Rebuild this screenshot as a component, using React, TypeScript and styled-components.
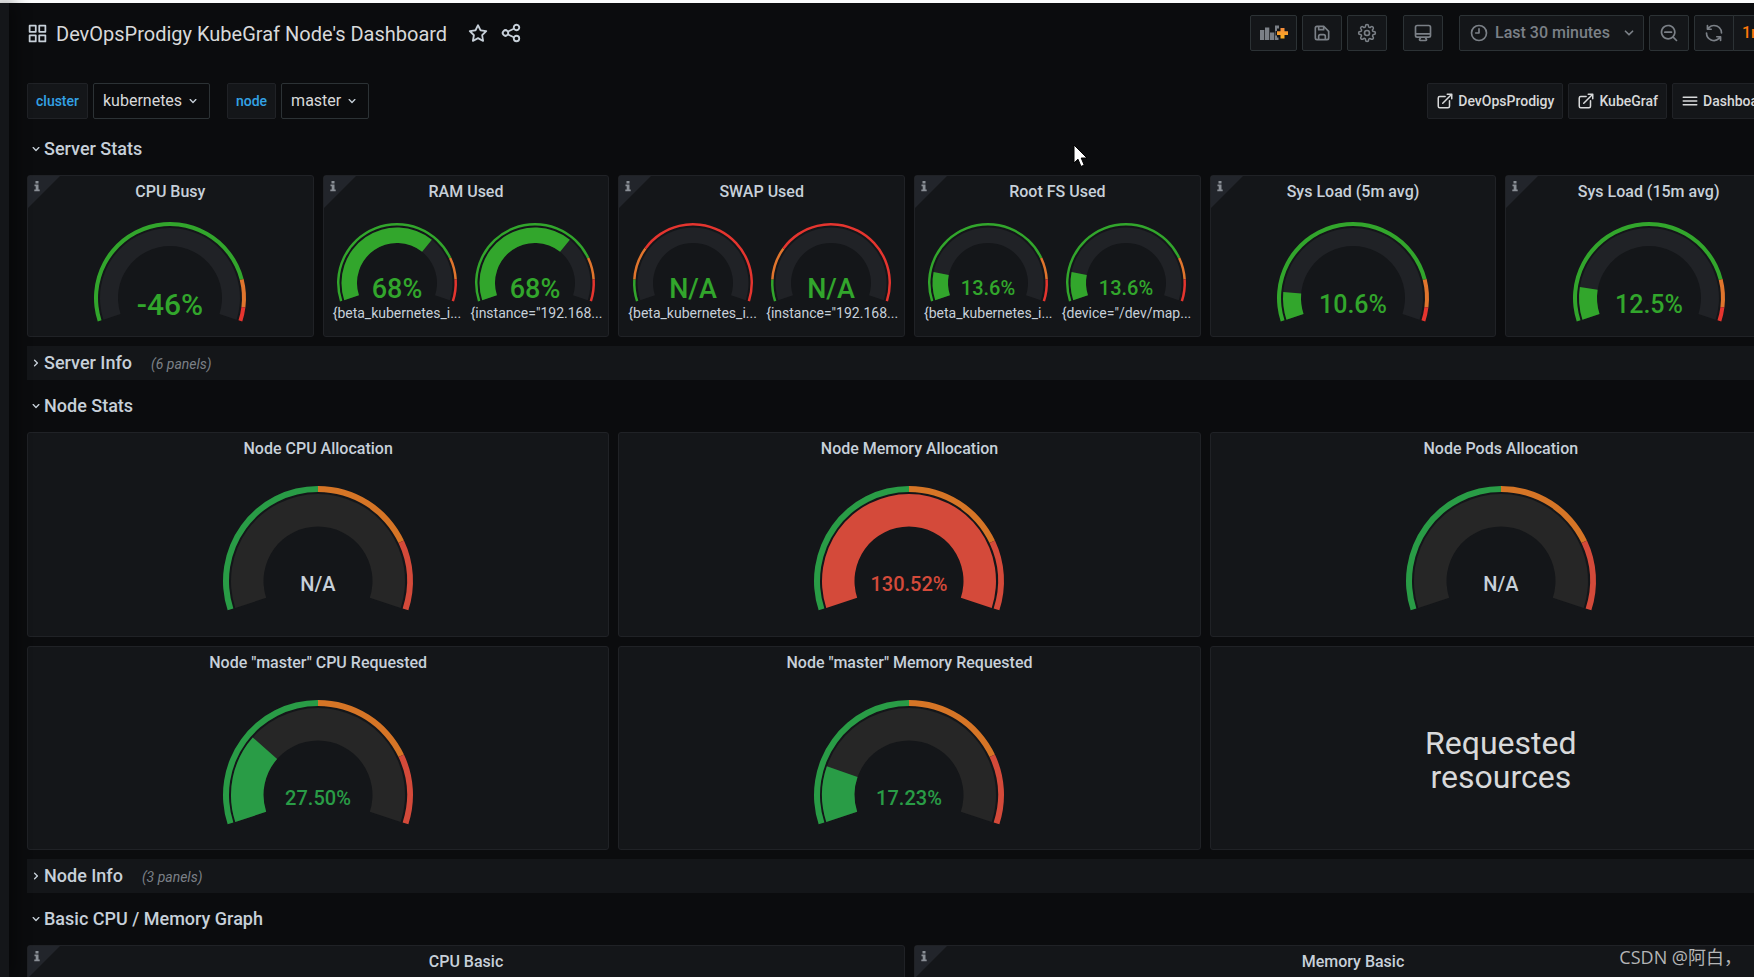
import React from 'react';
import styled, { createGlobalStyle, css } from 'styled-components';

const color = {
  page: '#0b0c0e',
  panel: '#141619',
  border: '#202226',
  inputBorder: '#2c3235',
  text: '#c7d0d9',
  strong: '#d8d9da',
  weak: '#7b8087',
  blue: '#33a2e5',
  orange: '#ff780a',
  corner: '#22252b',
};

const GlobalStyle = createGlobalStyle`
  *, *::before, *::after { box-sizing: border-box; }
  body {
    margin: 0;
    background: ${color.page};
    color: ${color.text};
    font-family: Roboto, "Noto Sans CJK SC", sans-serif;
    font-size: 16px;
    line-height: 24px;
  }
  button, select { font: inherit; color: inherit; margin: 0; cursor: pointer; }
  a { color: inherit; text-decoration: none; }
  h1, h2, h3, p { margin: 0; }
`;

/* ---------- page frame ---------- */

const Page = styled.div`
  display: flex;
  flex-direction: column;
  height: 100vh;
  overflow: hidden;
  position: relative;
`;

const TopStrip = styled.div`
  flex: none;
  height: 3px;
  background: #fafbfb;
`;

const Shell = styled.div`
  display: flex;
  flex: 1;
  min-height: 0;
`;

const Sidebar = styled.aside`
  flex: none;
  width: 9px;
  background: ${color.panel};
  box-shadow: 0 0 20px #000;
  z-index: 1;
`;

const Main = styled.main`
  flex: 1;
  min-width: 0;
  overflow: hidden;
  padding: 12px 0 0 18px;
`;

/* The dashboard is wider than the viewport and runs past its right edge. */
const Dashboard = styled.div`
  margin-right: -38px;
`;

const Bar = styled.header`
  display: flex;
  align-items: center;
  height: 36px;
`;

const SubMenu = styled.div`
  display: flex;
  align-items: center;
  height: 36px;
  margin: 32px 0 13px;
`;

const Spacer = styled.div`
  flex: 1;
`;

const Title = styled.h1`
  font-size: 20px;
  line-height: 24px;
  font-weight: 400;
  color: ${color.strong};
  padding-top: 2px;
  margin: 0 20px 0 8px;
  white-space: nowrap;
`;

const IconButton = styled.button`
  display: flex;
  padding: 0;
  margin-right: 11px;
  border: 0;
  background: none;
`;

const controlBox = css`
  display: flex;
  align-items: center;
  height: 36px;
  border: 1px solid ${color.inputBorder};
  border-radius: 2px;
  background: ${color.panel};
  white-space: nowrap;
`;

const ToolButton = styled.button<{ $wide?: boolean; $joined?: boolean; $gap?: number }>`
  ${controlBox}
  && { margin-left: ${(p) => p.$gap ?? 5}px; }
  justify-content: center;
  width: ${(p) => (p.$wide ? 47 : 40)}px;
  padding: 0;
  && { color: ${color.weak}; }
  ${(p) => p.$joined && 'border-radius: 2px 0 0 2px;'}
`;

const TimeButton = styled.button`
  ${controlBox}
  width: 185px;
  padding: 0 4px 0 9px;
  gap: 6px;
  && { margin-left: 16px; color: ${color.weak}; }
  font-weight: 500;
  svg:last-child { margin-left: auto; }
`;

const SelectWrap = styled.div`
  position: relative;
  display: flex;
  svg {
    position: absolute;
    right: 9px;
    top: 10px;
    pointer-events: none;
  }
`;

const Select = styled.select`
  ${controlBox}
  appearance: none;
  background: ${color.page};
  padding: 0 26px 0 9px;
  outline: none;
  && { color: ${color.strong}; }
`;

const IntervalSelect = styled(Select)`
  width: 59px;
  padding: 0 24px 0 8px;
  border-radius: 0 2px 2px 0;
  background: ${color.panel};
  font-weight: 500;
  && { color: ${color.orange}; margin-left: -1px; }
`;

const Variable = styled.div`
  display: flex;
  gap: 5px;
  margin-right: 17px;
`;

const VariableLabel = styled.label`
  ${controlBox}
  border-color: ${color.border};
  padding: 0 8px;
  font-size: 14px;
  font-weight: 500;
  color: ${color.blue};
`;

const DashLink = styled.a`
  ${controlBox}
  border-color: ${color.border};
  padding: 0 8px;
  gap: 4px;
  margin-left: 5px;
  font-size: 14px;
  font-weight: 500;
  color: ${color.strong};
`;

const DashMenu = styled(DashLink).attrs({ as: 'button' })`
  width: 120px;
  && { margin-left: 5px; color: ${color.strong}; font-size: 14px; font-weight: 500; }
`;

/* ---------- rows and panels ---------- */

const Stack = styled.div`
  display: flex;
  flex-direction: column;
  gap: 9px;
`;

const RowHead = styled.h2<{ $collapsed?: boolean }>`
  display: flex;
  align-items: center;
  height: 34px;
  font-size: 18px;
  font-weight: 500;
  background: ${(p) => (p.$collapsed ? color.panel : 'transparent')};
`;

const RowToggle = styled.button`
  display: flex;
  align-items: center;
  padding: 0 0 0 1px;
  border: 0;
  background: none;
`;

const RowCount = styled.span`
  margin-left: 19px;
  padding-top: 2px;
  font-size: 14px;
  font-style: italic;
  font-weight: 400;
  color: ${color.weak};
`;

const Grid = styled.div<{ $cols: number; $height: number }>`
  display: grid;
  grid-template-columns: repeat(${(p) => p.$cols}, minmax(0, 1fr));
  grid-auto-rows: 1fr;
  gap: 9px;
  height: ${(p) => p.$height}px;
`;

const PanelBox = styled.section`
  position: relative;
  display: flex;
  flex-direction: column;
  border: 1px solid ${color.border};
  border-radius: 3px;
  background: ${color.panel};
`;

const PanelTitle = styled.h3`
  flex: none;
  height: 34px;
  line-height: 32px;
  font-size: 16px;
  font-weight: 500;
  text-align: center;
`;

const CornerIcon = styled.svg`
  position: absolute;
  top: 0;
  left: 0;
`;

const SingleBody = styled.div<{ $top: number }>`
  display: flex;
  justify-content: center;
  padding-top: ${(p) => p.$top}px;
`;

const PairBody = styled.div`
  display: grid;
  grid-template-columns: 1fr 1fr;
  gap: 9px;
  padding: 13px 9px 0;
`;

const PairCell = styled.div`
  display: flex;
  flex-direction: column;
  align-items: center;
  min-width: 0;
`;

const Series = styled.p`
  align-self: stretch;
  font-size: 14px;
  line-height: 20px;
  white-space: nowrap;
`;

const TextBody = styled.div`
  flex: 1;
  display: flex;
  align-items: center;
  justify-content: center;
  padding-top: 24px;
`;

const BigText = styled.p`
  width: 180px;
  font-size: 32px;
  line-height: 34px;
  text-align: center;
  color: ${color.strong};
`;

const GaugeSvg = styled.svg`
  display: block;
  overflow: visible;
`;

const GaugeText = styled.text`
  font-family: Roboto, sans-serif;
  font-weight: 500;
  text-anchor: middle;
`;

const Pointer = styled.svg`
  position: absolute;
  left: 1073px;
  top: 144px;
  z-index: 2;
`;

const Watermark = styled.div`
  position: absolute;
  right: 12px;
  bottom: 8px;
  z-index: 2;
  font-family: "Open Sans", "Noto Sans CJK SC", sans-serif;
  font-size: 18px;
  line-height: 24px;
  color: #b4b5b6;
`;

/* ---------- icons ---------- */

const paths = {
  apps: 'M10,13H3a1,1,0,0,0-1,1v7a1,1,0,0,0,1,1h7a1,1,0,0,0,1-1V14A1,1,0,0,0,10,13ZM9,20H4V15H9ZM21,2H14a1,1,0,0,0-1,1v7a1,1,0,0,0,1,1h7a1,1,0,0,0,1-1V3A1,1,0,0,0,21,2ZM20,9H15V4h5Zm1,4H14a1,1,0,0,0-1,1v7a1,1,0,0,0,1,1h7a1,1,0,0,0,1-1V14A1,1,0,0,0,21,13Zm-1,7H15V15h5ZM10,2H3A1,1,0,0,0,2,3v7a1,1,0,0,0,1,1h7a1,1,0,0,0,1-1V3A1,1,0,0,0,10,2ZM9,9H4V4H9Z',
  star: 'M22,9.67A1,1,0,0,0,21.14,9l-5.69-.83L12.9,3a1,1,0,0,0-1.8,0L8.55,8.16,2.86,9a1,1,0,0,0-.81.68,1,1,0,0,0,.25,1l4.13,4-1,5.68A1,1,0,0,0,6.9,21.44L12,18.77l5.1,2.67a.93.93,0,0,0,.46.12,1,1,0,0,0,.59-.19,1,1,0,0,0,.4-1l-1-5.68,4.13-4A1,1,0,0,0,22,9.67Zm-6.15,4a1,1,0,0,0-.29.88l.72,4.2-3.76-2a1.06,1.06,0,0,0-.94,0l-3.76,2,.72-4.2a1,1,0,0,0-.29-.88l-3-3,4.21-.61a1,1,0,0,0,.76-.55L12,5.7l1.88,3.82a1,1,0,0,0,.76.55l4.21.61Z',
  share: 'M18,14a4,4,0,0,0-3.08,1.48l-5.1-2.35a3.64,3.64,0,0,0,0-2.26l5.1-2.35A4,4,0,1,0,14,6a4.17,4.17,0,0,0,.07.71L8.79,9.14a4,4,0,1,0,0,5.72l5.28,2.43A4.17,4.17,0,0,0,14,18a4,4,0,1,0,4-4ZM18,4a2,2,0,1,1-2,2A2,2,0,0,1,18,4ZM6,14a2,2,0,1,1,2-2A2,2,0,0,1,6,14Zm12,6a2,2,0,1,1,2-2A2,2,0,0,1,18,20Z',
  save: 'M20.71,9.29l-6-6a1,1,0,0,0-.32-.21A1.09,1.09,0,0,0,14,3H6A3,3,0,0,0,3,6V18a3,3,0,0,0,3,3H18a3,3,0,0,0,3-3V10A1,1,0,0,0,20.71,9.29ZM9,5h4V7H9Zm6,14H9V16a1,1,0,0,1,1-1h4a1,1,0,0,1,1,1Zm4-1a1,1,0,0,1-1,1H17V16a3,3,0,0,0-3-3H10a3,3,0,0,0-3,3v3H6a1,1,0,0,1-1-1V6A1,1,0,0,1,6,5H7V8A1,1,0,0,0,8,9h6a1,1,0,0,0,1-1V6.41l4,4Z',
  desktop: 'M19,2H5A3,3,0,0,0,2,5V15a3,3,0,0,0,3,3H7.64l-.58,1a2,2,0,0,0,0,2,2,2,0,0,0,1.75,1h6.46A2,2,0,0,0,17,21a2,2,0,0,0,0-2l-.59-1H19a3,3,0,0,0,3-3V5A3,3,0,0,0,19,2ZM8.77,20,10,18H14l1.2,2ZM20,15a1,1,0,0,1-1,1H5a1,1,0,0,1-1-1V14H20Zm0-3H4V5A1,1,0,0,1,5,4H19a1,1,0,0,1,1,1Z',
  clock: 'M12,2A10,10,0,1,0,22,12,10,10,0,0,0,12,2Zm0,18a8,8,0,1,1,8-8A8,8,0,0,1,12,20ZM12,6a1,1,0,0,0-1,1v4H8a1,1,0,0,0,0,2h4a1,1,0,0,0,1-1V7A1,1,0,0,0,12,6Z',
  zoomOut: 'M21.71,20.29,18,16.61A9,9,0,1,0,16.61,18l3.68,3.68a1,1,0,0,0,1.42,0A1,1,0,0,0,21.71,20.29ZM11,18a7,7,0,1,1,7-7A7,7,0,0,1,11,18Zm4-8H7a1,1,0,0,0,0,2h8a1,1,0,0,0,0-2Z',
  sync: 'M19.91,15.51H15.38a1,1,0,0,0,0,2h2.4A8,8,0,0,1,4,12a1,1,0,0,0-2,0,10,10,0,0,0,16.88,7.23V21a1,1,0,0,0,2,0V16.5A1,1,0,0,0,19.91,15.51ZM12,2A10,10,0,0,0,5.12,4.77V3a1,1,0,0,0-2,0V7.5a1,1,0,0,0,1,1h4.5a1,1,0,0,0,0-2H6.22A8,8,0,0,1,20,12a1,1,0,0,0,2,0A10,10,0,0,0,12,2Z',
  external: 'M18,10.82a1,1,0,0,0-1,1V19a1,1,0,0,1-1,1H5a1,1,0,0,1-1-1V8A1,1,0,0,1,5,7h7.18a1,1,0,0,0,0-2H5A3,3,0,0,0,2,8V19a3,3,0,0,0,3,3H16a3,3,0,0,0,3-3V11.82A1,1,0,0,0,18,10.82Zm3.92-8.2a1,1,0,0,0-.54-.54A1,1,0,0,0,21,2H15a1,1,0,0,0,0,2h3.59L8.29,14.29a1,1,0,0,0,0,1.42,1,1,0,0,0,1.42,0L20,5.41V9a1,1,0,0,0,2,0V3A1,1,0,0,0,21.92,2.62Z',
  bars: 'M3,8H21a1,1,0,0,0,0-2H3A1,1,0,0,0,3,8Zm18,8H3a1,1,0,0,0,0,2H21a1,1,0,0,0,0-2Zm0-5H3a1,1,0,0,0,0,2H21a1,1,0,0,0,0-2Z',
  down: 'M17,9.17a1,1,0,0,0-1.41,0L12,12.71,8.46,9.17a1,1,0,0,0-1.41,0,1,1,0,0,0,0,1.42l4.24,4.24a1,1,0,0,0,1.42,0L17,10.59A1,1,0,0,0,17,9.17Z',
  right: 'M14.83,11.29,10.59,7.05a1,1,0,0,0-1.42,0,1,1,0,0,0,0,1.41L12.71,12,9.17,15.54a1,1,0,0,0,0,1.41,1,1,0,0,0,.71.29,1,1,0,0,0,.71-.29l4.24-4.24A1,1,0,0,0,14.83,11.29Z',
};

const Icon = ({ name, size = 20 }: { name: keyof typeof paths; size?: number }) => (
  <svg width={size} height={size} viewBox="0 0 24 24" fill="currentColor" aria-hidden="true">
    <path d={paths[name]} />
  </svg>
);

const CogIcon = () => (
  <svg width="20" height="20" viewBox="0 0 24 24" fill="none" stroke="currentColor" strokeWidth="2" aria-hidden="true">
    <circle cx="12" cy="12" r="3" />
    <path
      transform="translate(1 1) scale(0.917)"
      d="M19.4 15a1.65 1.65 0 0 0 .33 1.82l.06.06a2 2 0 1 1-2.83 2.83l-.06-.06a1.65 1.65 0 0 0-2.8 1.17V21a2 2 0 0 1-4 0v-.09a1.65 1.65 0 0 0-2.9-1.26l-.06.06a2 2 0 1 1-2.83-2.83l.06-.06A1.65 1.65 0 0 0 3.1 14H3a2 2 0 0 1 0-4h.09A1.65 1.65 0 0 0 4.35 7.1l-.06-.06a2 2 0 1 1 2.83-2.83l.06.06A1.65 1.65 0 0 0 10 3.1V3a2 2 0 0 1 4 0v.09a1.65 1.65 0 0 0 2.82 1.18l.06-.06a2 2 0 1 1 2.83 2.83l-.06.06A1.65 1.65 0 0 0 20.9 10H21a2 2 0 0 1 0 4h-.09a1.65 1.65 0 0 0-1.51 1z"
    />
  </svg>
);

const AddPanelIcon = () => (
  <svg width="28" height="18" viewBox="0 0 28 18" aria-hidden="true">
    <defs>
      <linearGradient id="plus" x1="0" y1="0" x2="0" y2="1">
        <stop offset="0" stopColor="#f58b3c" />
        <stop offset="1" stopColor="#fbb01e" />
      </linearGradient>
    </defs>
    <g fill={color.weak}>
      <path d="M0 6h4.300v10h-4.300zM5 3.500h4.300v12.500h-4.300zM10 8.500h4.300v7.500h-4.300z" />
      <path d="M15 1.500h4v3h-2v2.500h-1.500v4.500h1.500v2h1.500v2.500h-3.500z" />
    </g>
    <path fill="url(#plus)" d="M20.500 4h4v3.300h3.500v3.700h-3.500v3.500h-4v-3.500h-3.500v-3.700h3.500z" />
  </svg>
);

/* ---------- gauge ---------- */

type Step = [to: number, color: string];

const shapes = {
  single: { r: 76, ring: 4, outer: 70, inner: 52, shift: 6, track: '#202226' },
  pair: { r: 60, ring: 2.5, outer: 55.5, inner: 40, shift: 5, track: '#202226' },
  legacy: { r: 95, ring: 6, outer: 87, inner: 54.5, shift: 3, track: '#262626' },
};

const SWEEP = 216;
const START = 162;

const point = (r: number, share: number, c: number) => {
  const a = ((START + SWEEP * share) * Math.PI) / 180;
  return `${(c + r * Math.cos(a)).toFixed(2)} ${(c + r * Math.sin(a)).toFixed(2)}`;
};

const band = (c: number, outer: number, inner: number, from: number, to: number) => {
  const large = (to - from) * SWEEP > 180 ? 1 : 0;
  return `M${point(outer, from, c)}A${outer} ${outer} 0 ${large} 1 ${point(outer, to, c)}L${point(inner, to, c)}A${inner} ${inner} 0 ${large} 0 ${point(inner, from, c)}Z`;
};

type GaugeProps = {
  shape: keyof typeof shapes;
  steps: Step[];
  fill?: number;
  value: string;
  size: number;
  tone: string;
};

const Gauge = ({ shape, steps, fill = 0, value, size, tone }: GaugeProps) => {
  const s = shapes[shape];
  const height = Math.ceil(s.r * 1.32);
  return (
    <GaugeSvg width={s.r * 2} height={height} viewBox={`0 0 ${s.r * 2} ${height}`} role="img" aria-label={value}>
      {fill < 1 && <path d={band(s.r, s.outer, s.inner, 0, 1)} fill={s.track} />}
      {fill > 0 && <path d={band(s.r, s.outer, s.inner, 0, Math.min(fill, 1))} fill={tone} />}
      {steps.map(([to, stepColor], i) => (
        <path key={to} d={band(s.r, s.r, s.r - s.ring, i ? steps[i - 1][0] : 0, to)} fill={stepColor} />
      ))}
      <GaugeText x={s.r} y={s.r + s.shift + Math.round(size * 0.36)} fontSize={size} fill={tone}>
        {value}
      </GaugeText>
    </GaugeSvg>
  );
};

const G = '#32a62c';
const O = '#e0752d';
const R = '#e5352f';
const loadSteps: Step[] = [[0.85, G], [0.95, O], [1, R]];
const usedSteps: Step[] = [[0.8, G], [0.9, O], [1, R]];
const swapSteps: Step[] = [[0.1, G], [0.25, O], [1, R]];
const LG = '#299c46';
const LR = '#d44a3a';
const nodeSteps: Step[] = [[0.5, LG], [0.8, '#d67526'], [1, LR]];

const Panel = ({ title, info, children }: { title?: string; info?: boolean; children?: React.ReactNode }) => (
  <PanelBox>
    {info && (
      <CornerIcon width="32" height="32" viewBox="0 0 32 32" role="img" aria-label="Panel description">
        <path d="M0 0H32L0 32Z" fill={color.corner} />
        <path d="M7.500 5h3v2.400h-3zM6.500 8.500h4v5h1.200v1.700h-5.400v-1.700h1.400v-3.300h-1.200z" fill="#8a8f96" />
      </CornerIcon>
    )}
    {title && <PanelTitle>{title}</PanelTitle>}
    {children}
  </PanelBox>
);

const PairPanel = ({ title, names, ...gauge }: { title: string; names: string[] } & Omit<GaugeProps, 'shape'>) => (
  <Panel title={title} info>
    <PairBody>
      {names.map((name) => (
        <PairCell key={name}>
          <Gauge shape="pair" {...gauge} />
          <Series>{name}</Series>
        </PairCell>
      ))}
    </PairBody>
  </Panel>
);

const SinglePanel = ({ title, ...gauge }: { title: string } & GaugeProps) => (
  <Panel title={title} info={gauge.shape === 'single'}>
    <SingleBody $top={gauge.shape === 'single' ? 12 : 19}>
      <Gauge {...gauge} />
    </SingleBody>
  </Panel>
);

const Row = ({ title, count }: { title: string; count?: string }) => (
  <RowHead $collapsed={!!count}>
    <RowToggle aria-expanded={!count}>
      <Icon name={count ? 'right' : 'down'} size={16} />
      {title}
      {count && <RowCount>{count}</RowCount>}
    </RowToggle>
  </RowHead>
);

const VariableSelect = ({ id, value }: { id: string; value: string }) => (
  <Variable>
    <VariableLabel htmlFor={id}>{id}</VariableLabel>
    <SelectWrap>
      <Select id={id} defaultValue={value}>
        <option>{value}</option>
      </Select>
      <Icon name="down" size={16} />
    </SelectWrap>
  </Variable>
);

export default function App() {
  return (
    <Page>
      <GlobalStyle />
      <TopStrip />
      <Shell>
        <Sidebar />
        <Main>
          <Dashboard>
            <Bar>
              <Icon name="apps" size={21} />
              <Title>DevOpsProdigy KubeGraf Node's Dashboard</Title>
              <IconButton aria-label="Mark as favorite"><Icon name="star" size={22} /></IconButton>
              <IconButton aria-label="Share dashboard"><Icon name="share" size={22} /></IconButton>
              <Spacer />
              <ToolButton $wide aria-label="Add panel"><AddPanelIcon /></ToolButton>
              <ToolButton aria-label="Save dashboard"><Icon name="save" /></ToolButton>
              <ToolButton aria-label="Dashboard settings"><CogIcon /></ToolButton>
              <ToolButton $gap={16} aria-label="Cycle view mode"><Icon name="desktop" /></ToolButton>
              <TimeButton>
                <Icon name="clock" />
                Last 30 minutes
                <Icon name="down" />
              </TimeButton>
              <ToolButton aria-label="Zoom out"><Icon name="zoomOut" /></ToolButton>
              <ToolButton $joined aria-label="Refresh"><Icon name="sync" /></ToolButton>
              <SelectWrap>
                <IntervalSelect aria-label="Refresh interval" defaultValue="1m">
                  <option>1m</option>
                </IntervalSelect>
                <Icon name="down" size={16} />
              </SelectWrap>
            </Bar>

            <SubMenu>
              <VariableSelect id="cluster" value="kubernetes" />
              <VariableSelect id="node" value="master" />
              <Spacer />
              <DashLink href="#devopsprodigy"><Icon name="external" size={18} />DevOpsProdigy</DashLink>
              <DashLink href="#kubegraf"><Icon name="external" size={18} />KubeGraf</DashLink>
              <DashMenu><Icon name="bars" size={18} />Dashboards</DashMenu>
            </SubMenu>

            <Stack>
              <Row title="Server Stats" />
              <Grid $cols={6} $height={162}>
                <SinglePanel title="CPU Busy" shape="single" steps={loadSteps} value="-46%" size={30} tone={G} />
                <PairPanel title="RAM Used" names={['{beta_kubernetes_i...', '{instance="192.168...']} steps={usedSteps} fill={0.68} value="68%" size={27} tone={G} />
                <PairPanel title="SWAP Used" names={['{beta_kubernetes_i...', '{instance="192.168...']} steps={swapSteps} value="N/A" size={27} tone={G} />
                <PairPanel title="Root FS Used" names={['{beta_kubernetes_i...', '{device="/dev/map...']} steps={usedSteps} fill={0.136} value="13.6%" size={20} tone={G} />
                <SinglePanel title="Sys Load (5m avg)" shape="single" steps={loadSteps} fill={0.106} value="10.6%" size={25} tone={G} />
                <SinglePanel title="Sys Load (15m avg)" shape="single" steps={loadSteps} fill={0.125} value="12.5%" size={25} tone={G} />
              </Grid>

              <Row title="Server Info" count="(6 panels)" />
              <Row title="Node Stats" />
              <Grid $cols={3} $height={418}>
                <SinglePanel title="Node CPU Allocation" shape="legacy" steps={nodeSteps} value="N/A" size={20} tone={color.text} />
                <SinglePanel title="Node Memory Allocation" shape="legacy" steps={nodeSteps} fill={1.3052} value="130.52%" size={20} tone={LR} />
                <SinglePanel title="Node Pods Allocation" shape="legacy" steps={nodeSteps} value="N/A" size={20} tone={color.text} />
                <SinglePanel title={'Node "master" CPU Requested'} shape="legacy" steps={nodeSteps} fill={0.275} value="27.50%" size={20} tone={LG} />
                <SinglePanel title={'Node "master" Memory Requested'} shape="legacy" steps={nodeSteps} fill={0.1723} value="17.23%" size={20} tone={LG} />
                <Panel>
                  <TextBody>
                    <BigText>Requested resources</BigText>
                  </TextBody>
                </Panel>
              </Grid>

              <Row title="Node Info" count="(3 panels)" />
              <Row title="Basic CPU / Memory Graph" />
              <Grid $cols={2} $height={290}>
                <Panel title="CPU Basic" info />
                <Panel title="Memory Basic" info />
              </Grid>
            </Stack>
          </Dashboard>
        </Main>
      </Shell>
      <Pointer width="16" height="24" viewBox="0 0 16 24" aria-hidden="true">
        <path d="M1 1V19L5 15.200L8 22.500L11.200 21L8.200 14H14Z" fill="#fff" stroke="#000" strokeWidth="1" />
      </Pointer>
      <Watermark>CSDN @阿白，</Watermark>
    </Page>
  );
}
